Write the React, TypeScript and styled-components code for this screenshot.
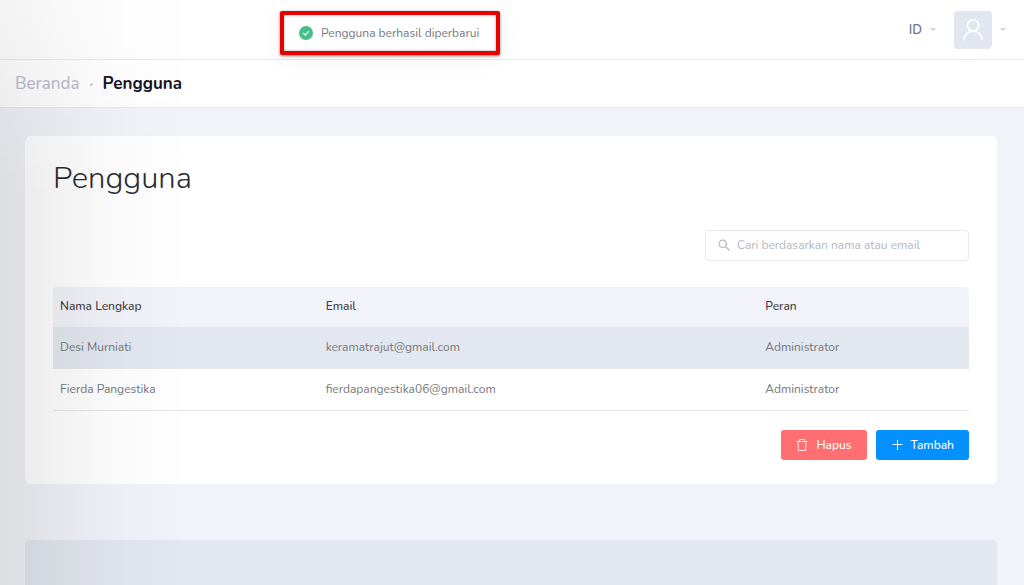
import React from "react";
import styled, { createGlobalStyle, css } from "styled-components";

const GlobalStyle = createGlobalStyle`
  *, *::before, *::after { box-sizing: border-box; }
  body {
    margin: 0;
    background: #f2f3f8;
    color: #76777c;
    font: 400 12px/20px Nunito, "Open Sans", sans-serif;
  }
  button, input { font: inherit; }
`;

const Page = styled.div`
  position: relative;
  min-height: 100vh;
  display: flex;
  flex-direction: column;
`;

const SidebarShade = styled.div`
  position: absolute;
  inset: 0 auto 0 0;
  width: 190px;
  pointer-events: none;
  background: linear-gradient(to right, rgba(0, 0, 0, 0.09), rgba(0, 0, 0, 0.06) 25%, rgba(0, 0, 0, 0.02) 60%, rgba(0, 0, 0, 0));
  mask-image: linear-gradient(to bottom, rgba(0, 0, 0, 0.5), #000 200px);
`;

const TopBar = styled.header`
  display: flex;
  align-items: center;
  justify-content: flex-end;
  gap: 18px;
  height: 60px;
  padding-right: 18px;
  background: #fff;
  border-bottom: 1px solid #e7e8f1;
`;

const MenuButton = styled.button`
  display: flex;
  align-items: center;
  gap: 8px;
  padding: 0;
  border: 0;
  background: none;
  color: #74788d;
  font-size: 13px;
  font-weight: 600;
`;

const Caret = styled.span`
  border: 3px solid transparent;
  border-top-color: #c9d2e0;
  border-bottom: 0;
`;

const Avatar = styled.span`
  display: grid;
  place-items: center;
  width: 38px;
  height: 38px;
  border-radius: 4px;
  background: #e2e6ee;
`;

const Toast = styled.div`
  position: absolute;
  top: 11px;
  left: 280px;
  display: flex;
  align-items: center;
  gap: 8px;
  width: 220px;
  height: 44px;
  padding-left: 15px;
  border: 4px solid #e60000;
  border-radius: 2px;
  background: #fff;
  box-shadow: 0 1px 3px rgba(0, 0, 0, 0.5), inset 0 0 3px rgba(0, 0, 0, 0.35), 0 4px 24px rgba(0, 0, 0, 0.05);
`;

const Breadcrumb = styled.nav`
  display: flex;
  align-items: center;
  gap: 10px;
  height: 48px;
  padding: 1px 0 0 15px;
  background: #fff;
  border-bottom: 1px solid #e4e9f0;
  font-size: 17px;
  font-weight: 700;
  color: #16141f;
`;

const Crumb = styled.a`
  color: #bfbed0;
  font-weight: 500;
  text-decoration: none;
`;

const Dot = styled.span`
  width: 3px;
  height: 3px;
  border-radius: 50%;
  background: #cfcedc;
`;

const Content = styled.main`
  flex: 1;
  display: flex;
  flex-direction: column;
  gap: 56px;
  padding: 28px 27px 0 25px;
`;

const Card = styled.section`
  padding: 24px 28px;
  border-radius: 6px;
  background: #fff;
`;

const Title = styled.h1`
  margin: 0;
  color: #2c2c30;
  font-size: 31px;
  line-height: 36px;
  font-weight: 300;
`;

const SearchBox = styled.label`
  display: flex;
  align-items: center;
  gap: 7px;
  width: 264px;
  height: 31px;
  margin: 34px 0 26px auto;
  padding: 0 12px 2px;
  border: 1px solid #e6e7f0;
  border-radius: 4px;
`;

const SearchInput = styled.input`
  flex: 1;
  min-width: 0;
  padding: 0;
  border: 0;
  outline: 0;
  background: none;
  &::placeholder { color: #b4b7c2; opacity: 1; }
`;

const Table = styled.table`
  width: 100%;
  border-collapse: separate;
  border-spacing: 0;
  table-layout: fixed;
`;

const HeadCell = styled.th<{ $width: string }>`
  width: ${(p) => p.$width};
  height: 40px;
  padding: 0 7px 2px;
  background: #f2f3f8;
  color: #3c3c42;
  font-weight: 500;
  text-align: left;
  &:first-child { border-top-left-radius: 4px; }
  &:last-child { border-top-right-radius: 4px; }
`;

const Row = styled.tr<{ $active?: boolean }>`
  ${(p) => p.$active && css`background: #e3e7ef;`}
`;

const Cell = styled.td`
  height: 42px;
  padding: 0 7px 2px;
  border-bottom: 1px solid #e6e7e9;
`;

const Actions = styled.div`
  display: flex;
  justify-content: flex-end;
  gap: 9px;
  margin-top: 19px;
`;

const ActionButton = styled.button<{ $color: string }>`
  display: flex;
  align-items: center;
  gap: 8px;
  height: 30px;
  padding: 0 15px 1px;
  border: 0;
  border-radius: 3px;
  background: ${(p) => p.$color};
  color: #fff;
  font-weight: 500;
`;

const FooterPanel = styled.footer`
  flex: 1;
  min-height: 44px;
  border-radius: 4px 4px 0 0;
  background: #e3e7ef;
`;

const users = [
  { name: "Desi Murniati", email: "keramatrajut@gmail.com", role: "Administrator" },
  { name: "Fierda Pangestika", email: "fierdapangestika06@gmail.com", role: "Administrator" },
];

export default function App() {
  return (
    <>
      <GlobalStyle />
      <Page>
        <TopBar>
          <MenuButton>ID<Caret /></MenuButton>
          <MenuButton aria-label="Akun">
            <Avatar>
              <svg width="22" height="24" viewBox="0 0 22 24" fill="none" stroke="#fff" strokeWidth="1.8" strokeLinecap="round">
                <circle cx="11" cy="7.5" r="5.6" />
                <path d="M2 21.5a9 8.4 0 0 1 18 0" />
              </svg>
            </Avatar>
            <Caret />
          </MenuButton>
        </TopBar>
        <Breadcrumb aria-label="Breadcrumb">
          <Crumb href="#">Beranda</Crumb><Dot /><span>Pengguna</span>
        </Breadcrumb>
        <Content>
          <Card>
            <Title>Pengguna</Title>
            <SearchBox>
              <svg width="12" height="12" viewBox="0 0 12 12" fill="none" stroke="#b4b7c2" strokeWidth="1.2">
                <circle cx="4.8" cy="4.8" r="3.7" /><path d="M7.5 7.5l4 4" />
              </svg>
              <SearchInput aria-label="Cari" placeholder="Cari berdasarkan nama atau email" />
            </SearchBox>
            <Table>
              <thead>
                <tr>
                  <HeadCell $width="29%">Nama Lengkap</HeadCell>
                  <HeadCell $width="48%">Email</HeadCell>
                  <HeadCell $width="23%">Peran</HeadCell>
                </tr>
              </thead>
              <tbody>
                {users.map((u, i) => (
                  <Row key={u.email} $active={i === 0}>
                    <Cell>{u.name}</Cell><Cell>{u.email}</Cell><Cell>{u.role}</Cell>
                  </Row>
                ))}
              </tbody>
            </Table>
            <Actions>
              <ActionButton $color="#ff6e70">
                <svg width="12" height="12" viewBox="0 0 12 12" fill="none" stroke="#fff" strokeOpacity="0.85">
                  <path d="M.5 2.5h11M3.5 2.5v-2h5v2M2 2.5l.4 9h7.2l.4-9" />
                </svg>
                Hapus
              </ActionButton>
              <ActionButton $color="#0590ff">
                <svg width="12" height="12" viewBox="0 0 12 12" fill="none" stroke="#fff">
                  <path d="M6.5 1v10M1.5 5.5h10" />
                </svg>
                Tambah
              </ActionButton>
            </Actions>
          </Card>
          <FooterPanel />
        </Content>
        <SidebarShade />
        <Toast role="status">
          <svg width="14" height="14" viewBox="0 0 14 14">
            <circle cx="7" cy="7" r="7" fill="#46be8a" />
            <path d="M4.2 7.2l2 2 3.6-4" fill="none" stroke="#fff" strokeWidth="1.2" />
          </svg>
          Pengguna berhasil diperbarui
        </Toast>
      </Page>
    </>
  );
}
